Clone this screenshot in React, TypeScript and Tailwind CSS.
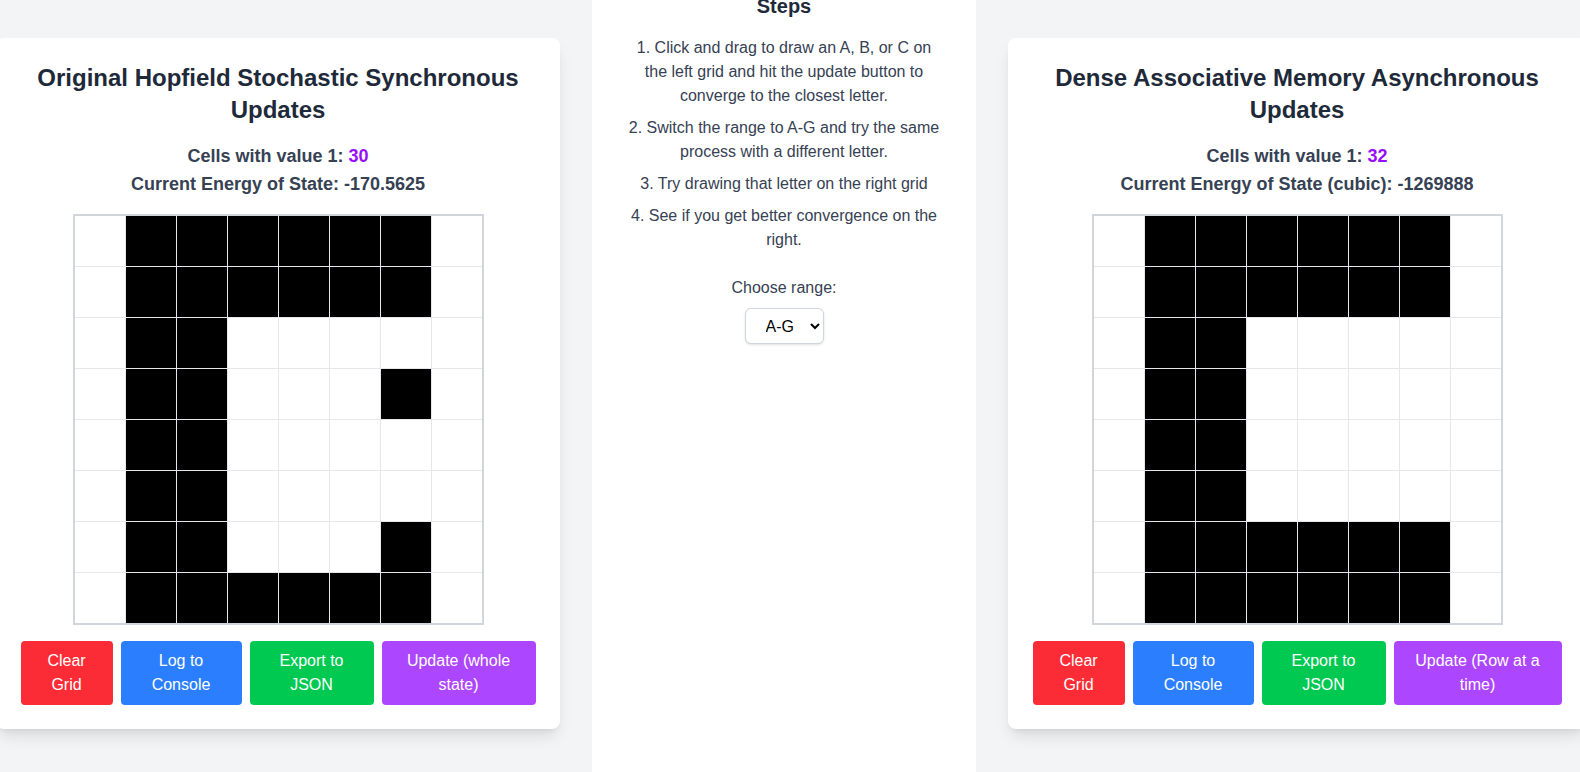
import React from "react";

const LEFT: number[][] = [
  [0, 1, 1, 1, 1, 1, 1, 0],
  [0, 1, 1, 1, 1, 1, 1, 0],
  [0, 1, 1, 0, 0, 0, 0, 0],
  [0, 1, 1, 0, 0, 0, 1, 0],
  [0, 1, 1, 0, 0, 0, 0, 0],
  [0, 1, 1, 0, 0, 0, 0, 0],
  [0, 1, 1, 0, 0, 0, 1, 0],
  [0, 1, 1, 1, 1, 1, 1, 0],
];

const RIGHT: number[][] = [
  [0, 1, 1, 1, 1, 1, 1, 0],
  [0, 1, 1, 1, 1, 1, 1, 0],
  [0, 1, 1, 0, 0, 0, 0, 0],
  [0, 1, 1, 0, 0, 0, 0, 0],
  [0, 1, 1, 0, 0, 0, 0, 0],
  [0, 1, 1, 0, 0, 0, 0, 0],
  [0, 1, 1, 1, 1, 1, 1, 0],
  [0, 1, 1, 1, 1, 1, 1, 0],
];

function Grid({ data }: { data: number[][] }) {
  return (
    <div className="mx-auto grid w-[411px] grid-cols-8 gap-px border-2 border-gray-300 bg-gray-200">
      {data.flat().map((v, i) => (
        <div key={i} className={v ? "h-[50px] w-[50px] bg-black" : "h-[50px] w-[50px] bg-white"} />
      ))}
    </div>
  );
}

function Card({
  title,
  count,
  energyLabel,
  energy,
  data,
  width,
  updateLabel,
  updateWidth,
  exportWidth,
}: {
  title: string;
  count: number;
  energyLabel: string;
  energy: string;
  data: number[][];
  width: string;
  updateLabel: string;
  updateWidth: string;
  exportWidth: string;
}) {
  return (
    <div className={`${width} mt-[38px] shrink-0 rounded-lg bg-white p-6 shadow-lg`}>
      <h2 className="mb-4 text-center text-2xl font-bold leading-8 text-gray-800">{title}</h2>
      <div className="mb-4 text-center text-lg font-bold leading-7 text-gray-700">
        <div>
          Cells with value 1: <span className="text-purple-600">{count}</span>
        </div>
        <div>
          {energyLabel}: {energy}
        </div>
      </div>
      <Grid data={data} />
      <div className="mt-4 flex justify-center gap-2 text-base leading-6 text-white">
        <button className="w-[92px] shrink-0 rounded bg-red-500 px-4 py-2">Clear Grid</button>
        <button className="w-[121px] shrink-0 rounded bg-blue-500 px-4 py-2">Log to Console</button>
        <button className={`${exportWidth} shrink-0 rounded bg-green-500 px-4 py-2`}>Export to JSON</button>
        <button className={`${updateWidth} shrink-0 rounded bg-purple-500 px-4 py-2`}>{updateLabel}</button>
      </div>
    </div>
  );
}

export default function App() {
  return (
    <div className="h-screen w-full overflow-hidden bg-gray-100 font-['Liberation_Sans',Arial,sans-serif]">
      <div className="-ml-1 flex h-full w-max items-start gap-8">
        <Card
          title="Original Hopfield Stochastic Synchronous Updates"
          count={30}
          energyLabel="Current Energy of State"
          energy="-170.5625"
          data={LEFT}
          width="w-[564px]"
          updateLabel="Update (whole state)"
          updateWidth="w-[154px]"
          exportWidth="w-[124px]"
        />
        <div className="flex h-full w-96 shrink-0 flex-col items-center bg-white px-8 text-center text-gray-700">
          <h3 className="-mt-2 mb-4 text-xl font-bold leading-7 text-gray-800">Steps</h3>
          <ol className="space-y-2 text-base leading-6">
            <li>1. Click and drag to draw an A, B, or C on the left grid and hit the update button to converge to the closest letter.</li>
            <li>2. Switch the range to A-G and try the same process with a different letter.</li>
            <li>3. Try drawing that letter on the right grid</li>
            <li>4. See if you get better convergence on the right.</li>
          </ol>
          <div className="mt-6 text-base leading-6">Choose range:</div>
          <select
            defaultValue="A-G"
            className="mt-2 h-9 rounded-md border border-gray-300 bg-white pl-4 pr-3 text-base text-black shadow-sm"
          >
            <option value="A-C">A-C</option>
            <option value="A-G">A-G</option>
          </select>
        </div>
        <Card
          title="Dense Associative Memory Asynchronous Updates"
          count={32}
          energyLabel="Current Energy of State (cubic)"
          energy="-1269888"
          data={RIGHT}
          width="w-[578px]"
          updateLabel="Update (Row at a time)"
          updateWidth="w-[168px]"
          exportWidth="w-[124px]"
        />
      </div>
    </div>
  );
}
